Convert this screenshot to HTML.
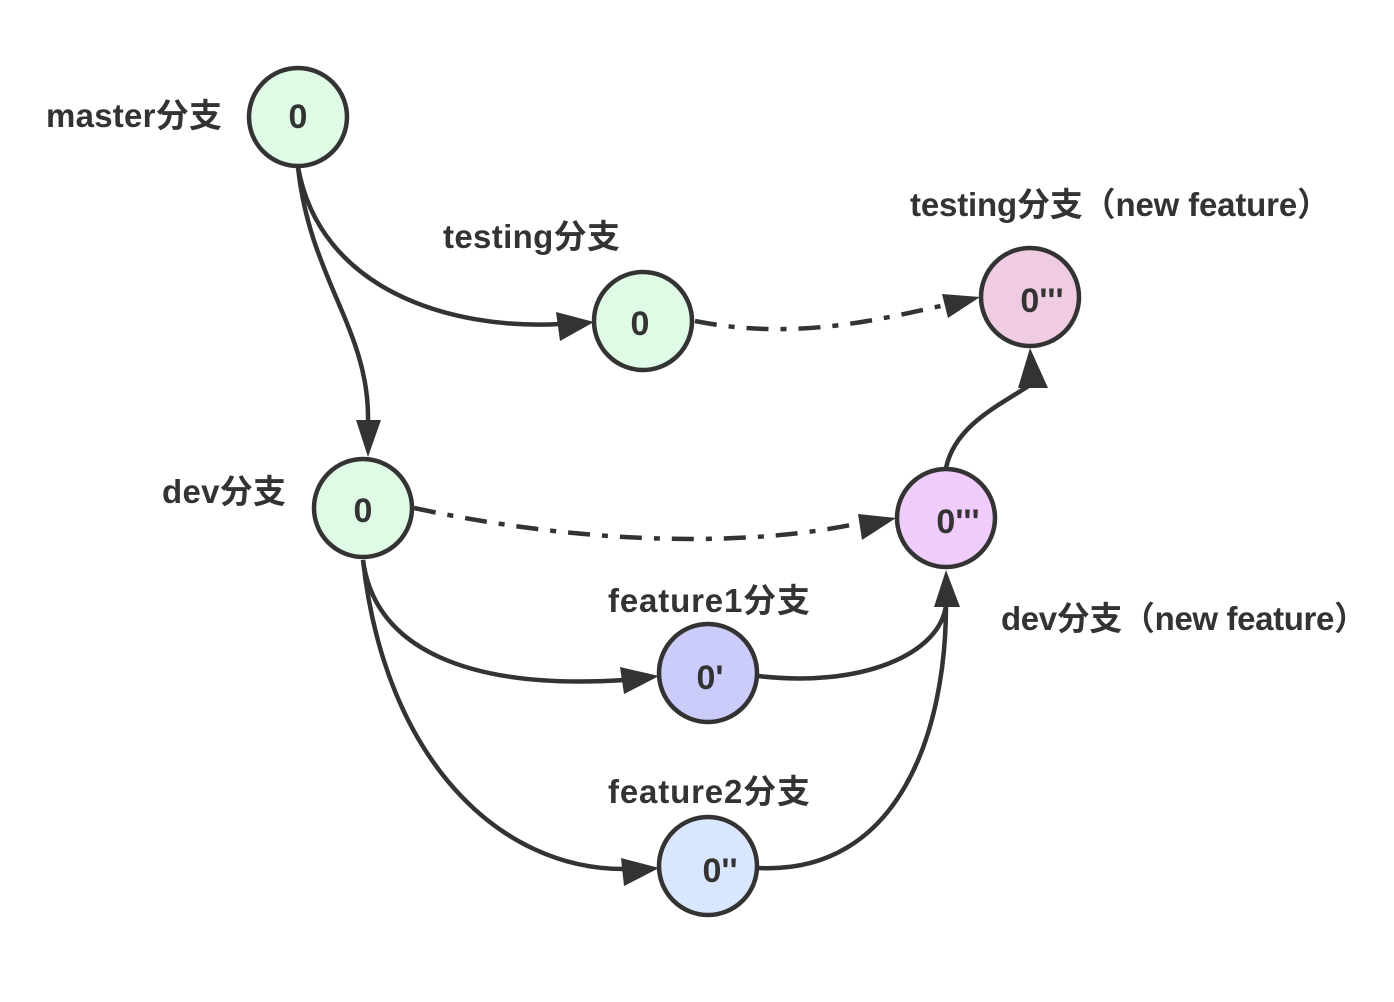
<!DOCTYPE html>
<html><head><meta charset="utf-8"><style>
html,body{margin:0;padding:0;background:#fff;}
svg{display:block;}
text{font-family:"Liberation Sans","Noto Sans CJK SC",sans-serif;font-weight:bold;fill:#333;}
</style></head><body>
<svg width="1394" height="1002" viewBox="0 0 1394 1002" xmlns="http://www.w3.org/2000/svg">
<g fill="none" stroke="#333" stroke-width="4.5">
<path d="M298,167 C320,290 450,330 560,324"/>
<path d="M298,167 C310,280 370,330 368,422"/>
<path d="M695,321 C790,340 870,322 945,305" stroke-dasharray="22,12,6,12"/>
<path d="M414,508 C600,548 760,545 860,523" stroke-dasharray="22,12,6,12"/>
<path d="M363,560 C375,650 470,690 625,680"/>
<path d="M363,560 C385,760 500,870 625,869"/>
<path d="M758,676 C860,688 940,655 946,605"/>
<path d="M758,868 C900,875 946,730 946,605"/>
<path d="M946,468 C955,425 1000,405 1030,385"/>
</g>
<g fill="#333">
<polygon points="594,322 556,312 560,341"/>
<polygon points="368,457 356,420 381,420"/>
<polygon points="980,297 942,294 948,318"/>
<polygon points="896,518 858,514 862,540"/>
<polygon points="659,676 620,667 624,694"/>
<polygon points="659,868 621,858 624,886"/>
<polygon points="946,570 934,607 960,607"/>
<polygon points="1030,348 1018,388 1048,388"/>
</g>
<g stroke="#333" stroke-width="4.5">
<circle cx="298" cy="117" r="49" fill="#dffbe5"/>
<circle cx="643" cy="321" r="49" fill="#dffbe5"/>
<circle cx="363" cy="508" r="49" fill="#dffbe5"/>
<circle cx="1030" cy="297" r="49" fill="#f0cce2"/>
<circle cx="946" cy="518" r="49" fill="#f0ccfb"/>
<circle cx="708" cy="673" r="49" fill="#ccccfb"/>
<circle cx="708" cy="866" r="49" fill="#d8e6fe"/>
</g>
<g font-size="34" text-anchor="middle">
<text x="298" y="128">0</text>
<text x="640" y="335">0</text>
<text x="363" y="522">0</text>
<text x="1042" y="312">0'''</text>
<text x="958" y="533">0'''</text>
<text x="710" y="689">0'</text>
<text x="720" y="882">0''</text>
</g>
<g font-size="33">
<text x="46" y="127" textLength="176">master分支</text>
<text x="443" y="248" textLength="177">testing分支</text>
<text x="910" y="216" textLength="420">testing分支（new feature）</text>
<text x="162" y="503" textLength="124">dev分支</text>
<text x="608" y="612" textLength="202">feature1分支</text>
<text x="1001" y="630" textLength="366">dev分支（new feature）</text>
<text x="608" y="803" textLength="202">feature2分支</text>
</g>
</svg>
</body></html>
